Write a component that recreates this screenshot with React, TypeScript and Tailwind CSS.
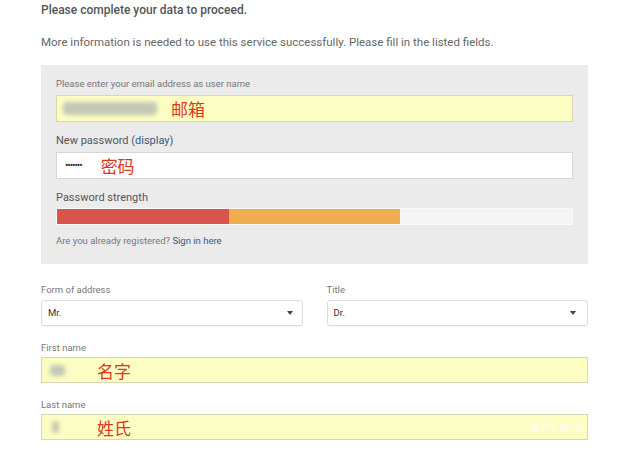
import React from "react";

const cjk = "font-['Noto_Sans_CJK_SC',sans-serif]";

function Caret() {
  return (
    <svg width="6" height="4" viewBox="0 0 6 4" className="shrink-0">
      <path d="M0 0h6L3 4z" fill="#444" />
    </svg>
  );
}

function Blur({ w, h }: { w: number; h: number }) {
  return (
    <div
      className="rounded-sm bg-[#c4c7b4] blur-[2px]"
      style={{ width: w, height: h }}
    />
  );
}

export default function App() {
  return (
    <div className="h-[453px] w-[630px] overflow-hidden bg-white font-['Roboto',sans-serif]">
      <div className="w-[588px] pl-[41px] pt-[3px]">
        <p className="text-[12px] font-medium leading-[15px] text-[#555]">
          Please complete your data to proceed.
        </p>
        <p className="mt-[17px] text-[11.5px] leading-[15px] text-[#666]">
          More information is needed to use this service successfully. Please fill in the listed fields.
        </p>

        <div className="mt-[15px] bg-[#ebebeb] px-[15px] pb-[17px] pt-[12px]">
          <label className="block text-[9.5px] leading-[13px] text-[#777]">
            Please enter your email address as user name
          </label>
          <div className="mt-[5px] flex h-[27px] items-center gap-[14px] border border-[#d8d8b0] bg-[#fbfdc2] pl-[6px]">
            <Blur w={94} h={13} />
            <span className={`${cjk} text-[17px] leading-none text-[#d9381e]`}>邮箱</span>
          </div>

          <label className="mt-[12px] block text-[11px] leading-[14px] text-[#555]">
            New password (<span className="text-[#2a5c8a]">display</span>)
          </label>
          <div className="mt-[4px] flex h-[27px] items-center gap-[19px] border border-[#d6d6d6] bg-white pl-[8px]">
            <span className="text-[10px] leading-none tracking-[-1px] text-[#333]">•••••••</span>
            <span className={`${cjk} text-[17px] leading-none text-[#d9381e]`}>密码</span>
          </div>

          <label className="mt-[12px] block text-[11px] leading-[14px] text-[#555]">
            Password strength
          </label>
          <div className="mt-[3px] flex h-[17px] border border-[#fafafa] bg-[#f5f5f5]">
            <div className="w-[172px] bg-[#d9534f]" />
            <div className="w-[171px] bg-[#f0ad4e]" />
          </div>

          <p className="mt-[9px] text-[9.5px] leading-[13px] text-[#777]">
            Are you already registered? <span className="text-[#2a5c8a]">Sign in here</span>
          </p>
        </div>

        <div className="mt-[19px] grid grid-cols-2 gap-[24px]">
          <div>
            <label className="block text-[9.5px] leading-[13px] text-[#777]">Form of address</label>
            <div className="mt-[4px] flex h-[26px] items-center justify-between rounded-[3px] border border-[#ddd] bg-white px-[6px] pr-[9px] shadow-[0_1px_1px_rgba(0,0,0,0.05)]">
              <span className="text-[9.5px] text-[#333]">Mr.</span>
              <Caret />
            </div>
          </div>
          <div>
            <label className="block text-[9.5px] leading-[13px] text-[#777]">Title</label>
            <div className="mt-[4px] flex h-[26px] items-center justify-between rounded-[3px] border border-[#ddd] bg-white px-[6px] pr-[11px] shadow-[0_1px_1px_rgba(0,0,0,0.05)]">
              <span className="text-[9.5px] text-[#333]">Dr.</span>
              <Caret />
            </div>
          </div>
        </div>

        <label className="mt-[15px] block text-[9.5px] leading-[13px] text-[#777]">First name</label>
        <div className="mt-[3px] flex h-[26px] items-center gap-[32px] border border-[#d8d8b0] bg-[#fbfdc2] pl-[8px]">
          <Blur w={15} h={11} />
          <span className={`${cjk} text-[17px] leading-none text-[#d9381e]`}>名字</span>
        </div>

        <label className="mt-[15px] block text-[9.5px] leading-[13px] text-[#777]">Last name</label>
        <div className="mt-[3px] flex h-[26px] items-center gap-[38px] border border-[#d8d8b0] bg-[#fbfdc2] pl-[10px]">
          <Blur w={7} h={12} />
          <span className={`${cjk} text-[17px] leading-none text-[#d9381e]`}>姓氏</span>
          <span className="ml-auto mr-[4px] text-[9px] leading-[10px] text-white opacity-80">
            微信号 ljbxup
          </span>
        </div>
      </div>
    </div>
  );
}
